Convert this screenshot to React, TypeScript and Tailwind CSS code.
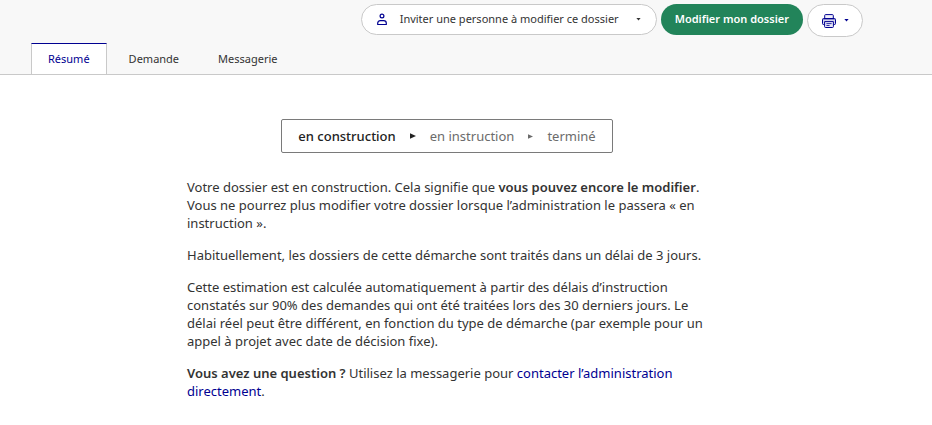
import React, { useState } from 'react';
import clsx from 'clsx';

const TABS = ['Résumé', 'Demande', 'Messagerie'];

const Caret: React.FC = () => (
  <svg width="5" height="3" viewBox="0 0 5 3" fill="currentColor" aria-hidden="true">
    <path d="M0.4 0h4.2L2.5 2.4z" />
  </svg>
);

const Arrow: React.FC<{ size: number }> = ({ size }) => (
  <svg width={size} height={size} viewBox="0 0 6 6" fill="currentColor" aria-hidden="true">
    <path d="M0 0.3L6 3 0 5.7z" />
  </svg>
);

const PersonIcon: React.FC = () => (
  <svg width="10" height="13" viewBox="0 0 10 13" fill="none" stroke="#000091" strokeWidth="1.2" aria-hidden="true">
    <circle cx="5" cy="3" r="1.9" />
    <path d="M0.7 11.5v-1.2c0-1.6 1-2.7 2.6-2.7h3.4c1.6 0 2.6 1.1 2.6 2.7v1.2z" strokeLinejoin="round" />
  </svg>
);

const PrinterIcon: React.FC = () => (
  <svg width="14" height="14" viewBox="0 0 14 14" fill="none" stroke="#000091" aria-hidden="true">
    <path d="M2.7 4.2V1.5q0-0.9 0.9-0.9h6.8q0.9 0 0.9 0.9v2.7" fill="#f0f0fa" />
    <path d="M2.6 10.5H1.4q-0.9 0-0.9-0.9V5.5q0-1 1-1h11q1 0 1 1v4.1q0 0.9-0.9 0.9h-1.2" fill="#d5d5ec" />
    <path d="M1 5.5h12" strokeOpacity="0.35" />
    <path d="M2.6 7.6h8.8v5q0 0.9-0.9 0.9h-7q-0.9 0-0.9-0.9z" fill="#e6e6f5" />
    <path d="M4.4 9.6h5.2M4.4 11.5h3.2" strokeWidth="0.8" />
  </svg>
);

const Header: React.FC = () => {
  const [active, setActive] = useState(TABS[0]);

  return (
    <header className="border-b border-[#c9c9c9] bg-[#f8f8f8] pl-[31px] pr-[69px] pt-1">
      <div className="flex items-start justify-end gap-1">
        <button
          type="button"
          className="flex h-[31px] items-center rounded-full border border-[#c9c9c9] bg-white px-[15px] text-[11px]"
        >
          <PersonIcon />
          <span className="ml-[13px] mr-[17px]">Inviter une personne à modifier ce dossier</span>
          <Caret />
        </button>
        <button
          type="button"
          className="h-[31px] rounded-full bg-[#22845a] px-[14px] text-[11px] font-semibold text-white"
        >
          Modifier mon dossier
        </button>
        <button
          type="button"
          aria-label="Imprimer"
          className="flex h-[33px] w-14 items-center justify-center gap-2 rounded-full border border-[#c9c9c9] bg-white text-[#000091]"
        >
          <PrinterIcon />
          <Caret />
        </button>
      </div>

      <nav className="mt-[6px] flex gap-[5px]" role="tablist">
        {TABS.map((tab) => (
          <button
            key={tab}
            type="button"
            role="tab"
            aria-selected={tab === active}
            onClick={() => setActive(tab)}
            className={clsx(
              'h-[31px] border-x border-t px-4 text-[11px]',
              tab === active
                ? 'border-x-[#c9c9c9] border-t-[#000091] bg-white text-[#000091]'
                : 'border-transparent'
            )}
          >
            {tab}
          </button>
        ))}
      </nav>
    </header>
  );
};

const App: React.FC = () => {
  return (
    <div className="min-h-screen bg-white font-['Noto_Sans',sans-serif] text-[#333333]">
      <Header />

      <main className="pl-[31px] pr-[69px] pt-11">
        <ol className="mx-auto flex w-fit items-center rounded-xs border border-[#7a7a7a] px-4 py-[7px] text-[13px] leading-[18px] text-[#6b6b6b]">
          <li className="font-medium text-[#222222]">en construction</li>
          <li className="mx-[14px] text-[#222222]" aria-hidden="true"><Arrow size={6} /></li>
          <li>en instruction</li>
          <li className="mx-[14px]" aria-hidden="true"><Arrow size={5} /></li>
          <li>terminé</li>
        </ol>

        <div className="mx-auto mt-[25px] flex max-w-[520px] flex-col gap-[14px] text-[13px] leading-[18px]">
          <p>
            Votre dossier est en construction. Cela signifie que{' '}
            <strong className="font-semibold">vous pouvez encore le modifier</strong>.
            <br />
            Vous ne pourrez plus modifier votre dossier lorsque l’administration le passera « en instruction ».
          </p>
          <p>Habituellement, les dossiers de cette démarche sont traités dans un délai de 3 jours.</p>
          <p>
            Cette estimation est calculée automatiquement à partir des délais d’instruction constatés sur 90% des
            demandes qui ont été traitées lors des 30 derniers jours. Le délai réel peut être différent, en fonction du
            type de démarche (par exemple pour un appel à projet avec date de décision fixe).
          </p>
          <p>
            <strong className="font-semibold">Vous avez une question ?</strong> Utilisez la messagerie pour{' '}
            <a href="#messagerie" className="text-[#000091]">
              contacter l’administration directement
            </a>
            .
          </p>
        </div>
      </main>
    </div>
  );
};

export default App;
